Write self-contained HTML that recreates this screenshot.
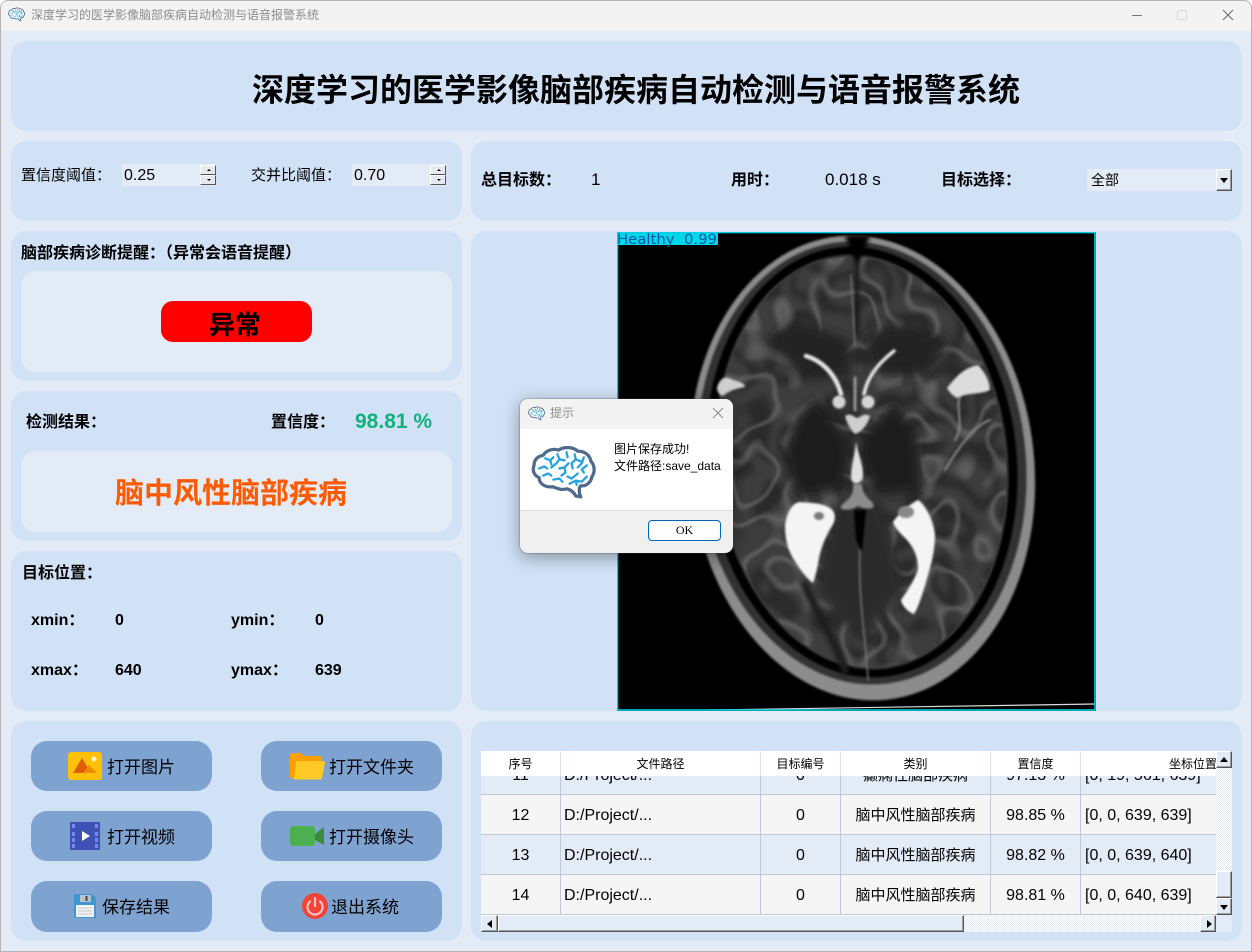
<!DOCTYPE html>
<html lang="zh"><head><meta charset="utf-8"><title>深度学习的医学影像脑部疾病自动检测与语音报警系统</title>
<style>
html,body{margin:0;padding:0;width:1252px;height:952px;overflow:hidden;background:#fff}
body{font-family:"Liberation Sans","Noto Sans CJK SC",sans-serif;color:#000;position:relative}
#win{position:absolute;left:0;top:0;width:1252px;height:952px;background:#e3ebf7;overflow:hidden;border-radius:8px 8px 0 0;box-shadow:inset 0 0 0 1px #b5b5b5}
.a{position:absolute}
.p{position:absolute;background:#d1e2f7;border-radius:15px}
.i{position:absolute;background:#e3ebf7;border-radius:15px}
.t{position:absolute;white-space:nowrap;line-height:24px;height:24px}
.b{font-weight:bold}
.btn{position:absolute;background:#7fa3d1;border-radius:16px;width:181px;height:50px}
.bt{position:absolute;white-space:nowrap;font-size:17px;line-height:24px}
.spin{position:absolute;width:94px;height:22px;background:#e3ebf7;font-size:16px;line-height:24px;text-indent:2px}
.sb{position:absolute;left:78px;width:16px;height:10px;background:#e6eaf0;border:1px solid;border-color:#fff #555 #555 #fff;box-sizing:border-box}
.sb i{position:absolute;left:6px;width:0;height:0;border-left:2px solid transparent;border-right:2px solid transparent}
.sbb{position:absolute;background:#e3ebf7;border:1px solid;border-color:#fff #555 #555 #fff;box-sizing:border-box;box-shadow:inset -1px -1px 0 #a0a0a0}
.tri{position:absolute;width:0;height:0}
.cell{position:absolute;height:39px;line-height:41px;font-size:16px;white-space:nowrap;text-align:center;overflow:hidden}
.cj{font-size:15px}
.hd{position:absolute;top:0;height:25px;line-height:26px;font-size:12px;text-align:center;white-space:nowrap;overflow:hidden;border-right:1px solid #dfe4ec;box-sizing:border-box}
</style></head><body>
<svg width="0" height="0" style="position:absolute"><defs>
<symbol id="brain" viewBox="0 0 64 52">
<path d="M44 49C42 45 39 43 35 42C29 44 25 41 21 40C14 41 8 37 8 31C3 29 1 24 3 19C3 13 7 10 12 9C15 4 22 2 27 4C33 0 42 1 46 5C53 5 58 9 59 15C63 19 63 26 60 30C59 36 54 40 49 39C47 41 47 46 49 50Z" fill="#fff" stroke="#4f6a8c" stroke-width="3.200" stroke-linejoin="round"/>
<path d="M8 22L13 20L16 22M12 29L17 27L20 29M14 12L19 14L22 11M19 14L20 18M26 8L28 13L25 17L20 21M28 13L33 14M35 6L36 11M37 17L33 21L34 26L30 29M33 21L28 22M43 8L44 13L40 17L41 22M44 13L49 15M52 11L50 17L46 21M55 19L50 23L52 26M22 33L28 32L31 35M36 30L40 32L46 27M38 37L44 34L50 35L55 30M44 34L45 38" fill="none" stroke="#29a3e0" stroke-width="2.300" stroke-linecap="round" stroke-linejoin="round"/>
</symbol>
<filter id="b1" x="-20%" y="-20%" width="140%" height="140%"><feGaussianBlur stdDeviation="1"/></filter>
<filter id="b2" x="-20%" y="-20%" width="140%" height="140%"><feGaussianBlur stdDeviation="2"/></filter>
<filter id="b4" x="-30%" y="-30%" width="160%" height="160%"><feGaussianBlur stdDeviation="5"/></filter>
<filter id="nl" color-interpolation-filters="sRGB" x="0" y="0" width="100%" height="100%">
<feTurbulence type="fractalNoise" baseFrequency=".016 .014" numOctaves="2" seed="7"/>
<feColorMatrix values="0 0 0 0 .6 0 0 0 0 .6 0 0 0 0 .6 1 0 0 0 0"/>
<feComponentTransfer><feFuncA type="table" tableValues="0 0 0 0 0 0 0 0 .7 0 0 0 .7 0 0 0 0 0 0 0 0"/></feComponentTransfer>
<feGaussianBlur stdDeviation=".8"/>
<feComposite in2="SourceGraphic" operator="in"/>
</filter>
<filter id="nd" color-interpolation-filters="sRGB" x="0" y="0" width="100%" height="100%">
<feTurbulence type="fractalNoise" baseFrequency=".018 .016" numOctaves="2" seed="23"/>
<feColorMatrix values="0 0 0 0 .13 0 0 0 0 .13 0 0 0 0 .13 1 0 0 0 0"/>
<feComponentTransfer><feFuncA type="table" tableValues="0 0 0 0 0 0 .7 .7 0 0 0 .7 .7 0 0 0 0 0 0 0"/></feComponentTransfer>
<feGaussianBlur stdDeviation="3"/>
<feComposite in2="SourceGraphic" operator="in"/>
</filter>
</defs></svg>

<div id="win">
<!-- title bar -->
<div class="a" style="left:1px;top:1px;width:1250px;height:30px;background:#f3f3f3;border-radius:7px 7px 0 0"></div>
<svg class="a" style="left:8px;top:7px" width="17" height="15"><use href="#brain" width="17" height="15"/></svg>
<div class="t" style="left:31px;top:3px;font-size:12px;color:#8c8c8c">深度学习的医学影像脑部疾病自动检测与语音报警系统</div>
<svg class="a" style="left:1125px;top:5px" width="120" height="20" fill="none">
<path d="M7 10.5H17" stroke="#777"/><rect x="52.5" y="5.5" width="9" height="9" rx="1" stroke="#d8d8d8"/><path d="M98 5L108 15M108 5L98 15" stroke="#666"/></svg>

<!-- panels -->
<div class="p" style="left:11px;top:41px;width:1231px;height:90px"></div>
<div class="t b" style="left:252px;top:66px;font-size:32px;line-height:48px;height:48px">深度学习的医学影像脑部疾病自动检测与语音报警系统</div>

<div class="p" style="left:11px;top:141px;width:451px;height:80px"></div>
<div class="t" style="left:21px;top:164px;font-size:15px">置信度阈值：</div>
<div class="spin" style="left:122px;top:164px">0.25<div class="sb" style="top:1px"><i style="top:3px;border-bottom:2px solid #000"></i></div><div class="sb" style="top:11px"><i style="top:3px;border-top:2px solid #000"></i></div></div>
<div class="t" style="left:251px;top:164px;font-size:15px">交并比阈值：</div>
<div class="spin" style="left:352px;top:164px">0.70<div class="sb" style="top:1px"><i style="top:3px;border-bottom:2px solid #000"></i></div><div class="sb" style="top:11px"><i style="top:3px;border-top:2px solid #000"></i></div></div>

<div class="p" style="left:471px;top:141px;width:771px;height:80px"></div>
<div class="t b" style="left:481px;top:169px;font-size:16px">总目标数：</div>
<div class="t" style="left:591px;top:168px;font-size:17px">1</div>
<div class="t b" style="left:731px;top:169px;font-size:16px">用时：</div>
<div class="t" style="left:825px;top:168px;font-size:17px">0.018 s</div>
<div class="t b" style="left:941px;top:169px;font-size:16px">目标选择：</div>
<div class="a" style="left:1087px;top:169px;width:145px;height:22px;background:#e3ebf7;font-size:14px;line-height:23px;text-indent:4px">全部</div>
<div class="sbb" style="left:1216px;top:169px;width:16px;height:22px"><div class="tri" style="left:3px;top:8px;border-left:4px solid transparent;border-right:4px solid transparent;border-top:5px solid #000"></div></div>

<div class="p" style="left:11px;top:231px;width:451px;height:150px"></div>
<div class="t b" style="left:21px;top:242px;font-size:16px">脑部疾病诊断提醒：（异常会语音提醒）</div>
<div class="i" style="left:21px;top:271px;width:431px;height:101px"></div>
<div class="a" style="left:161px;top:301px;width:151px;height:41px;background:#ff0000;border-radius:12px"></div>
<div class="t b" style="left:209px;top:305px;font-size:26px;line-height:40px;height:40px">异常</div>

<div class="p" style="left:11px;top:391px;width:451px;height:150px"></div>
<div class="t b" style="left:26px;top:411px;font-size:16px">检测结果：</div>
<div class="t b" style="left:271px;top:411px;font-size:16px">置信度：</div>
<div class="t b" style="left:355px;top:410px;font-size:21px;color:#12b07a">98.81 %</div>
<div class="i" style="left:21px;top:451px;width:431px;height:81px"></div>
<div class="t b" style="left:115px;top:473px;font-size:29px;line-height:42px;height:42px;color:#ff5a00">脑中风性脑部疾病</div>

<div class="p" style="left:11px;top:551px;width:451px;height:160px"></div>
<div class="t b" style="left:22px;top:562px;font-size:16px">目标位置：</div>
<div class="t b" style="left:31px;top:609px;font-size:16px">xmin：</div>
<div class="t b" style="left:115px;top:609px;font-size:16px">0</div>
<div class="t b" style="left:231px;top:609px;font-size:16px">ymin：</div>
<div class="t b" style="left:315px;top:609px;font-size:16px">0</div>
<div class="t b" style="left:31px;top:659px;font-size:16px">xmax：</div>
<div class="t b" style="left:115px;top:659px;font-size:16px">640</div>
<div class="t b" style="left:231px;top:659px;font-size:16px">ymax：</div>
<div class="t b" style="left:315px;top:659px;font-size:16px">639</div>

<div class="p" style="left:471px;top:231px;width:771px;height:480px"></div>

<!-- MRI -->
<svg class="a" style="left:617px;top:232px" width="479" height="479" viewBox="617 232 479 479">
<rect x="617" y="232" width="479" height="479" fill="#000"/>
<g transform="rotate(-6 862 465)">
<ellipse cx="862" cy="468" rx="172" ry="233" fill="#8c8c8c" filter="url(#b1)"/>
<ellipse cx="862" cy="463" rx="164" ry="222" fill="#333" filter="url(#b1)"/>
<ellipse cx="862" cy="462" rx="155" ry="216" fill="#060606" filter="url(#b1)"/>
<ellipse cx="862" cy="462" rx="146" ry="208" fill="#3e3e3e" filter="url(#b1)"/>
</g>
<g transform="rotate(-6 862 465)">
<ellipse cx="862" cy="462" rx="144" ry="206" fill="#000" filter="url(#nd)"/>
<ellipse cx="862" cy="462" rx="144" ry="206" fill="#000" filter="url(#nl)" opacity=".55"/>
</g>
<g filter="url(#b4)" fill="#1a1a1a">
<path d="M797 418L817 398L850 445L843 488L797 498L783 455Z"/>
<path d="M863 438L893 402L917 432L920 492L877 495L860 458Z"/>
<path d="M795 320L835 335L850 340L850 375L810 380L770 340Z" fill="#242424"/>
<path d="M865 335L905 325L950 340L925 375L875 375Z" fill="#242424"/>
<path d="M835 500L880 500L905 590L860 640L815 590Z" fill="#2c2c2c"/>
</g>
<g fill="none" stroke="#141414" stroke-linecap="round" filter="url(#b2)">
<path d="M857 262V335" stroke-width="4"/>
<path d="M805 585C815 610 835 640 845 670" stroke-width="8" stroke="#1e1e1e"/>
</g>
<path d="M845 235C850 250 856 262 857 265C860 258 866 248 870 235Z" fill="#050505" filter="url(#b2)"/>
<g fill="none" stroke-linecap="round" filter="url(#b1)">
<path d="M851 275C853 300 853 320 855 345" stroke="#777" stroke-width="1.500"/>
<path d="M860 550C858 600 866 640 868 680" stroke="#777" stroke-width="1.500"/>
<path d="M806 356C820 360 835 372 841 394" stroke="#e6e6e6" stroke-width="4.500"/>
<path d="M894 351C880 362 868 375 864 394" stroke="#e6e6e6" stroke-width="3.500"/>
<path d="M855 378V410" stroke="#999" stroke-width="3"/>
<path d="M955 440C965 425 955 410 960 395M945 470C960 445 975 425 990 420" stroke="#8a8a8a" stroke-width="2"/>
</g>
<g fill="#f4f4f4" filter="url(#b1)">
<path d="M785 525C787 512 792 503 800 502C812 503 822 503 830 508C836 512 836 520 832 526C826 536 822 545 819 558C818 566 815 578 813 583C806 578 799 568 794 560C788 550 785 540 785 525Z"/>
<path d="M893 522C900 512 909 505 918 500C926 505 934 522 935 535C935 552 930 570 926 582C922 596 918 608 914 614C908 612 902 606 901 600C908 590 916 578 918 568C918 555 912 545 905 538C899 532 895 528 893 522Z"/>
<circle cx="839" cy="402" r="6.500" fill="#d4d4d4"/>
<circle cx="868" cy="402" r="6.500" fill="#d4d4d4"/>
<path d="M845 416C851 412 855 418 857 418C860 418 864 412 870 416C868 424 862 432 855 434C851 430 847 424 845 416Z" fill="#cfcfcf"/>
<path d="M856 441C858 455 864 465 863 478C860 485 852 485 851 478C851 465 855 455 856 441Z" fill="#e0e0e0"/>
<path d="M853 484C854 498 848 498 842 505C836 510 850 512 858 506C866 510 878 510 872 502C866 497 862 492 862 484Z" fill="#8c8c8c"/>
<path d="M947 388C955 378 963 368 978 365C985 372 990 382 990 390C980 395 968 392 957 398C953 396 950 393 947 388Z" fill="#dcdcdc"/>
<path d="M717 388C719 380 724 376 729 378C737 382 745 382 745 387C738 388 730 390 723 396C720 396 717 392 717 388Z" fill="#d0d0d0"/>
</g>
<path d="M854 510L866 510L862 552L856 540Z" fill="#060606" filter="url(#b1)"/>
<ellipse cx="819" cy="516" rx="5" ry="4" fill="#777" filter="url(#b1)"/>
<ellipse cx="906" cy="512" rx="8" ry="6" fill="#888" filter="url(#b1)"/>
<path d="M710 710L1095 704" stroke="#dcdcdc" stroke-width="1.200"/>
<rect x="617" y="232" width="101" height="13" fill="#00d7e8"/>
<rect x="617.500" y="232.500" width="477.500" height="477.500" fill="none" stroke="#00cfe2" stroke-width="1.600"/>
<text x="617" y="244" font-family="DejaVu Sans,sans-serif" font-size="14" fill="#0c56a8" textLength="100" lengthAdjust="spacingAndGlyphs" xml:space="preserve">Healthy  0.99</text>
</svg>

<!-- buttons -->
<div class="p" style="left:11px;top:721px;width:451px;height:220px"></div>
<div class="btn" style="left:31px;top:741px"></div>
<div class="btn" style="left:261px;top:741px"></div>
<div class="btn" style="left:31px;top:811px"></div>
<div class="btn" style="left:261px;top:811px"></div>
<div class="btn" style="left:31px;top:881px;height:51px"></div>
<div class="btn" style="left:261px;top:881px;height:51px"></div>
<div class="bt" style="left:107px;top:756px">打开图片</div>
<div class="bt" style="left:329px;top:756px">打开文件夹</div>
<div class="bt" style="left:107px;top:826px">打开视频</div>
<div class="bt" style="left:329px;top:826px">打开摄像头</div>
<div class="bt" style="left:102px;top:896px">保存结果</div>
<div class="bt" style="left:331px;top:896px">退出系统</div>

<svg class="a" style="left:60px;top:745px" width="380" height="185" viewBox="60 745 380 185">
<!-- image -->
<rect x="68" y="752" width="34" height="28" rx="3" fill="#ffc107"/>
<circle cx="94" cy="759" r="2.500" fill="#fff3c4"/>
<path d="M73 773L82 758L91 773Z" fill="#dd5f00"/><path d="M83 773L89 765L97 773Z" fill="#f08a00"/>
<!-- folder -->
<path d="M290 757a3 3 0 0 1 3-4h7l5 3h14a3 3 0 0 1 3 3v19h-32Z" fill="#ffa000"/>
<path d="M296 763a2 2 0 0 1 2-2h25a2 2 0 0 1 2 2l-3 15a2 2 0 0 1-2 1.500h-25a1 1 0 0 1-1-1.500Z" fill="#ffca28"/>
<!-- film -->
<rect x="70" y="822" width="30" height="28" fill="#3f51b5"/>
<g fill="#8c9eff" opacity=".75"><rect x="72" y="824" width="3" height="4"/><rect x="72" y="832" width="3" height="4"/><rect x="72" y="838" width="3" height="4"/><rect x="72" y="844" width="3" height="4"/><rect x="95" y="824" width="3" height="4"/><rect x="95" y="832" width="3" height="4"/><rect x="95" y="838" width="3" height="4"/><rect x="95" y="844" width="3" height="4"/></g>
<path d="M82 831L90 836L82 841Z" fill="#fff"/>
<!-- camera -->
<rect x="290" y="826" width="25" height="20" rx="3" fill="#4caf50"/>
<path d="M315 834L324 827V845L315 840Z" fill="#388e3c"/>
<!-- floppy -->
<path d="M74 895a1 1 0 0 1 1-1h17l4 4v20H74Z" fill="#3d97d3"/>
<rect x="80" y="895" width="11" height="7" fill="#b8c2cc"/><rect x="85.500" y="896" width="2" height="5" fill="#444"/>
<rect x="76" y="905" width="18" height="12" fill="#f2f2f2"/>
<path d="M78 908H92M78 911H92M78 914H92" stroke="#c8c8c8"/>
<!-- power -->
<circle cx="315" cy="906" r="13" fill="#f44336"/>
<path d="M310 901.500a7.500 7.500 0 1 0 10 0" fill="none" stroke="#ffc4c4" stroke-width="2.200" stroke-linecap="round"/>
<path d="M315 898V906" stroke="#ffc4c4" stroke-width="2.200" stroke-linecap="round"/>
</svg>

<!-- table -->
<div class="p" style="left:471px;top:721px;width:771px;height:220px"></div>
<div class="a" style="left:481px;top:751px;width:735px;height:164px;overflow:hidden;background:#f5f5f5">
<div class="a" style="left:0;top:0;width:735px;height:44px;background:#e3ebf7"></div>
<div class="a" style="left:0;top:84px;width:735px;height:40px;background:#e3ebf7"></div>
<!-- rows -->
<div class="cell" style="left:0;top:4px;width:79px">11</div><div class="cell" style="left:83px;top:4px">D:/Project/...</div><div class="cell" style="left:280px;top:4px;width:79px">0</div><div class="cell cj" style="left:360px;top:4px;width:149px">癫痫性脑部疾病</div><div class="cell" style="left:510px;top:4px;width:89px">97.13 %</div><div class="cell" style="left:604px;top:4px">[0, 19, 561, 639]</div>
<div class="cell" style="left:0;top:44px;width:79px">12</div><div class="cell" style="left:83px;top:44px">D:/Project/...</div><div class="cell" style="left:280px;top:44px;width:79px">0</div><div class="cell cj" style="left:360px;top:44px;width:149px">脑中风性脑部疾病</div><div class="cell" style="left:510px;top:44px;width:89px">98.85 %</div><div class="cell" style="left:604px;top:44px">[0, 0, 639, 639]</div>
<div class="cell" style="left:0;top:84px;width:79px">13</div><div class="cell" style="left:83px;top:84px">D:/Project/...</div><div class="cell" style="left:280px;top:84px;width:79px">0</div><div class="cell cj" style="left:360px;top:84px;width:149px">脑中风性脑部疾病</div><div class="cell" style="left:510px;top:84px;width:89px">98.82 %</div><div class="cell" style="left:604px;top:84px">[0, 0, 639, 640]</div>
<div class="cell" style="left:0;top:124px;width:79px">14</div><div class="cell" style="left:83px;top:124px">D:/Project/...</div><div class="cell" style="left:280px;top:124px;width:79px">0</div><div class="cell cj" style="left:360px;top:124px;width:149px">脑中风性脑部疾病</div><div class="cell" style="left:510px;top:124px;width:89px">98.81 %</div><div class="cell" style="left:604px;top:124px">[0, 0, 640, 639]</div>
<!-- grid -->
<div class="a" style="left:0;top:43px;width:735px;height:1px;background:#bfc8d6"></div>
<div class="a" style="left:0;top:83px;width:735px;height:1px;background:#bfc8d6"></div>
<div class="a" style="left:0;top:123px;width:735px;height:1px;background:#bfc8d6"></div>
<div class="a" style="left:0;top:163px;width:735px;height:1px;background:#bfc8d6"></div>
<div class="a" style="left:79px;top:0;width:1px;height:164px;background:#bfc8d6"></div>
<div class="a" style="left:279px;top:0;width:1px;height:164px;background:#bfc8d6"></div>
<div class="a" style="left:359px;top:0;width:1px;height:164px;background:#bfc8d6"></div>
<div class="a" style="left:509px;top:0;width:1px;height:164px;background:#bfc8d6"></div>
<div class="a" style="left:599px;top:0;width:1px;height:164px;background:#bfc8d6"></div>
<!-- header -->
<div class="a" style="left:0;top:0;width:735px;height:25px;background:#fff"></div>
<div class="hd" style="left:0;width:80px">序号</div>
<div class="hd" style="left:80px;width:200px">文件路径</div>
<div class="hd" style="left:280px;width:80px">目标编号</div>
<div class="hd" style="left:360px;width:150px">类别</div>
<div class="hd" style="left:510px;width:90px">置信度</div>
<div class="hd" style="left:600px;width:135px;border:0;text-indent:88px;text-align:left">坐标位置</div>
</div>
<!-- v scrollbar -->
<div class="a" style="left:1216px;top:751px;width:16px;height:164px;background:repeating-conic-gradient(#e3ebf7 0 25%,#fff 0 50%) 0 0/2px 2px"></div>
<div class="sbb" style="left:1216px;top:751px;width:16px;height:17px"><div class="tri" style="left:3px;top:5px;border-left:4px solid transparent;border-right:4px solid transparent;border-bottom:5px solid #000"></div></div>
<div class="sbb" style="left:1216px;top:871px;width:16px;height:27px"></div>
<div class="sbb" style="left:1216px;top:898px;width:16px;height:17px"><div class="tri" style="left:3px;top:6px;border-left:4px solid transparent;border-right:4px solid transparent;border-top:5px solid #000"></div></div>
<!-- h scrollbar -->
<div class="a" style="left:481px;top:915px;width:751px;height:17px;background:#e3ebf7"></div>
<div class="a" style="left:964px;top:915px;width:236px;height:17px;background:repeating-conic-gradient(#e3ebf7 0 25%,#fff 0 50%) 0 0/2px 2px"></div>
<div class="sbb" style="left:481px;top:915px;width:17px;height:17px"><div class="tri" style="left:5px;top:4px;border-top:4px solid transparent;border-bottom:4px solid transparent;border-right:5px solid #000"></div></div>
<div class="sbb" style="left:498px;top:915px;width:466px;height:17px"></div>
<div class="sbb" style="left:1200px;top:915px;width:16px;height:17px"><div class="tri" style="left:6px;top:4px;border-top:4px solid transparent;border-bottom:4px solid transparent;border-left:5px solid #000"></div></div>

<!-- dialog -->
<div class="a" style="left:520px;top:399px;width:213px;height:154px;border-radius:8px;background:#f0f0f0;box-shadow:0 4px 18px rgba(0,0,0,.38),0 0 0 1px rgba(90,90,90,.25);overflow:hidden">
<div class="a" style="left:0;top:0;width:213px;height:30px;background:#f3f3f3"></div>
<div class="a" style="left:0;top:30px;width:213px;height:81px;background:#fff;border-bottom:1px solid #dcdcdc"></div>
<svg class="a" style="left:8px;top:7px" width="17" height="15"><use href="#brain" width="17" height="15"/></svg>
<div class="t" style="left:30px;top:2px;font-size:12px;color:#8c8c8c">提示</div>
<svg class="a" style="left:191px;top:7px" width="14" height="14"><path d="M2 2L12 12M12 2L2 12" stroke="#8a8a8a" fill="none"/></svg>
<svg class="a" style="left:11px;top:47px" width="65" height="53"><use href="#brain" width="65" height="53"/></svg>
<div class="t" style="left:94px;top:38px;font-size:12px">图片保存成功!</div>
<div class="t" style="left:94px;top:55px;font-size:12px">文件路径:save_data</div>
<div class="a" style="left:128px;top:121px;width:73px;height:21px;box-sizing:border-box;background:#fdfdfd;border:1.500px solid #0067c0;border-radius:4px;text-align:center;font-family:'Liberation Serif',serif;font-size:12px;line-height:19px">OK</div>
</div>
</div>
</body></html>
